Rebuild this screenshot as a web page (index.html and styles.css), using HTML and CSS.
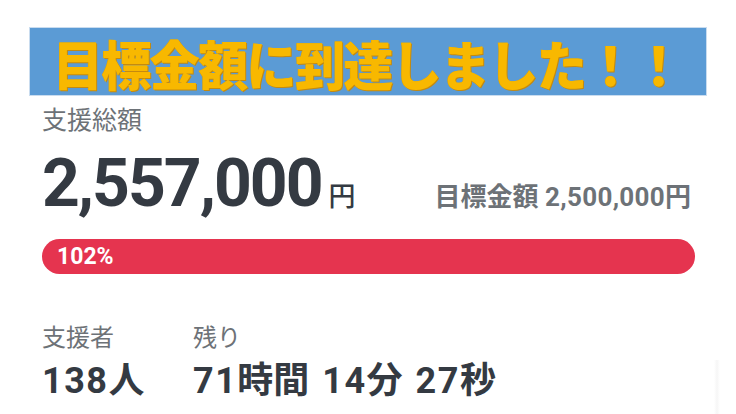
FILE: index.html
```html
<!DOCTYPE html>
<html lang="ja">
<head>
<meta charset="utf-8">
<link rel="stylesheet" href="styles.css">
</head>
<body>
<div class="page">
  <div class="banner"><span class="banner-text">目標金額に到達しました！！</span></div>
  <div class="content">
    <div class="label">支援総額</div>
    <div class="amount-row">
      <div class="amount"><span class="amount-num">2,557,000</span><span class="amount-yen">円</span></div>
      <div class="goal"><span class="goal-label">目標金額</span> <span class="goal-num">2,500,000</span><span class="goal-yen">円</span></div>
    </div>
    <div class="bar"><span class="bar-text">102%</span></div>
    <div class="stats">
      <div class="stat stat-people">
        <div class="label small">支援者</div>
        <div class="value"><span class="num">138</span><span class="jp">人</span></div>
      </div>
      <div class="stat">
        <div class="label small">残り</div>
        <div class="value"><span class="num">71</span><span class="jp">時間</span> <span class="num">14</span><span class="jp">分</span> <span class="num">27</span><span class="jp">秒</span></div>
      </div>
    </div>
  </div>
  <div class="edge"></div>
</div>
</body>
</html>
```

FILE: styles.css
```css
html, body {
  margin: 0;
  padding: 0;
  background: #ffffff;
}
body {
  width: 736px;
  height: 414px;
  overflow: hidden;
  font-family: Roboto, "Noto Sans CJK JP", sans-serif;
}
.page {
  position: relative;
  padding-top: 28px;
}
.banner {
  margin-left: 30px;
  width: 676px;
  height: 67px;
  background: #5b9bd5;
  box-shadow: 0 0 0 1px #c9dcef;
  display: flex;
  align-items: center;
  box-sizing: border-box;
  padding-left: 23px;
}
.banner-text {
  font-family: "Noto Sans CJK JP", sans-serif;
  font-weight: 900;
  font-size: 50px;
  letter-spacing: -1.6px;
  line-height: 1;
  color: #f8b800;
  text-shadow: 1px 1px 0 #c48a10, -0.5px -0.5px 0 #e0a400;
  display: inline-block;
  transform: scaleY(1.06);
  margin-top: 3px;
}
.content {
  padding: 0 41px 0 42px;
}
.label {
  font-family: "Noto Sans CJK JP", sans-serif;
  font-size: 25px;
  line-height: 1;
  color: #6d7277;
  margin-top: 11px;
}
.amount-row {
  display: flex;
  justify-content: space-between;
  align-items: baseline;
  margin-top: 20px;
  height: 62px;
}
.amount {
  display: flex;
  align-items: baseline;
  color: #343a42;
}
.amount-num {
  font-family: Roboto, sans-serif;
  font-weight: 700;
  font-size: 66px;
  letter-spacing: -2px;
  line-height: 1;
}
.amount-yen {
  font-family: "Noto Sans CJK JP", sans-serif;
  font-weight: 500;
  font-size: 27px;
  margin-left: 7px;
}
.goal {
  color: #6d7277;
  font-weight: 700;
  font-size: 26px;
  margin-right: 4px;
}
.goal-label, .goal-yen {
  font-family: "Noto Sans CJK JP", sans-serif;
  font-weight: 700;
}
.goal-num {
  font-family: Roboto, sans-serif;
  font-weight: 700;
  letter-spacing: 0.3px;
}
.bar {
  margin-top: 26px;
  height: 35px;
  border-radius: 17.5px;
  background: #e5344f;
  display: flex;
  align-items: center;
  padding-left: 15px;
}
.bar-text {
  font-family: Roboto, sans-serif;
  font-weight: 700;
  font-size: 23px;
  color: #ffffff;
}
.stats {
  display: flex;
  margin-top: 50px;
}
.stat-people {
  width: 151px;
}
.label.small {
  margin-top: 0;
  font-size: 24px;
}
.value {
  margin-top: 11px;
  color: #343a42;
  font-weight: 700;
  font-size: 36px;
  line-height: 1;
  word-spacing: 4px;
}
.value .num {
  font-family: Roboto, sans-serif;
  font-weight: 700;
  letter-spacing: 1.5px;
}
.value .jp {
  font-family: "Noto Sans CJK JP", sans-serif;
  font-weight: 700;
}
.edge {
  position: absolute;
  right: 16px;
  top: 360px;
  width: 6px;
  height: 54px;
  background: linear-gradient(to right, #ffffff, #f6f6f6, #ffffff);
}
```
